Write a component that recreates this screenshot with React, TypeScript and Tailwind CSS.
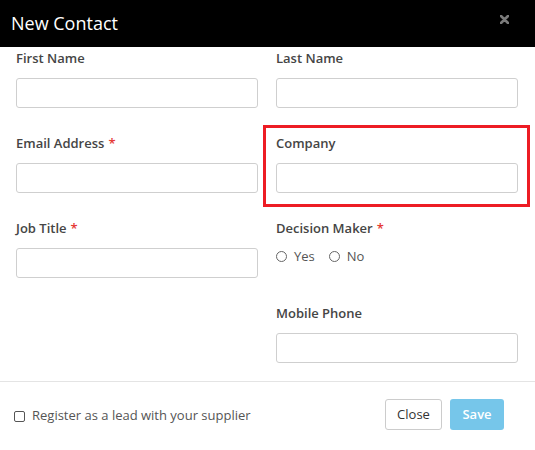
import React from "react";

const font = { fontFamily: '"Open Sans", "Noto Sans", Arial, sans-serif' };

function Label({ text, req }: { text: string; req?: boolean }) {
  return (
    <div className="h-[20px] flex items-center text-[13px] font-semibold text-[#454545] leading-none">
      <span>{text}</span>
      {req && <span className="text-[#e53935] ml-[4px]">*</span>}
    </div>
  );
}

function Input() {
  return <div className="mt-[10px] h-[30px] w-full rounded-[3px] border border-[#cfcfcf] bg-white" />;
}

function Field({ text, req }: { text: string; req?: boolean }) {
  return (
    <div className="flex flex-col h-[85px]">
      <Label text={text} req={req} />
      <Input />
    </div>
  );
}

function Radio({ label }: { label: string }) {
  return (
    <div className="flex items-center">
      <span className="w-[11px] h-[11px] rounded-full border border-[#666] bg-white" />
      <span className="ml-[7px] text-[13px] text-[#555]">{label}</span>
    </div>
  );
}

export default function App() {
  return (
    <div style={font} className="w-[535px] h-[450px] bg-white overflow-hidden flex flex-col">
      <div className="h-[47px] bg-black flex items-center justify-between pl-[11px] pr-[26px] shrink-0">
        <span className="text-white text-[18px] font-medium tracking-[0px]">New Contact</span>
        <svg width="9" height="9" viewBox="0 0 9 9" className="-mt-[9px]">
          <path d="M1 1L8 8M8 1L1 8" stroke="#7a7a7a" strokeWidth="2.6" strokeLinecap="round" />
        </svg>
      </div>
      <div className="grid grid-cols-[242px_242px] gap-x-[18px] pl-[16px] pt-[1px]">
        <Field text="First Name" />
        <Field text="Last Name" />
        <Field text="Email Address" req />
        <div className="relative">
          <Field text="Company" />
          <div className="absolute left-[-13px] top-[-8px] w-[267px] h-[82px] border-[3px] border-[#ed1c24] pointer-events-none" />
        </div>
        <Field text="Job Title" req />
        <div className="flex flex-col h-[85px]">
          <Label text="Decision Maker" req />
          <div className="mt-[9px] flex items-center gap-[14px]">
            <Radio label="Yes" />
            <Radio label="No" />
          </div>
        </div>
        <div />
        <div className="flex flex-col">
          <Label text="Mobile Phone" />
          <Input />
        </div>
      </div>
      <div className="mt-[18px] h-px bg-[#e4e4e4] w-full" />
      <div className="flex items-center justify-between pl-[14px] pr-[31px] pt-[17px]">
        <div className="flex items-center mt-[3px]">
          <span className="w-[11px] h-[11px] rounded-[2px] border border-[#555] bg-white" />
          <span className="ml-[7px] text-[13px] text-[#555]">Register as a lead with your supplier</span>
        </div>
        <div className="flex items-center gap-[8px]">
          <div className="h-[31px] w-[57px] rounded-[3px] border border-[#cccccc] flex items-center justify-center text-[13px] text-[#333]">
            Close
          </div>
          <div className="h-[31px] w-[54px] rounded-[3px] bg-[#76c6ea] flex items-center justify-center text-[13px] font-semibold text-white">
            Save
          </div>
        </div>
      </div>
    </div>
  );
}
